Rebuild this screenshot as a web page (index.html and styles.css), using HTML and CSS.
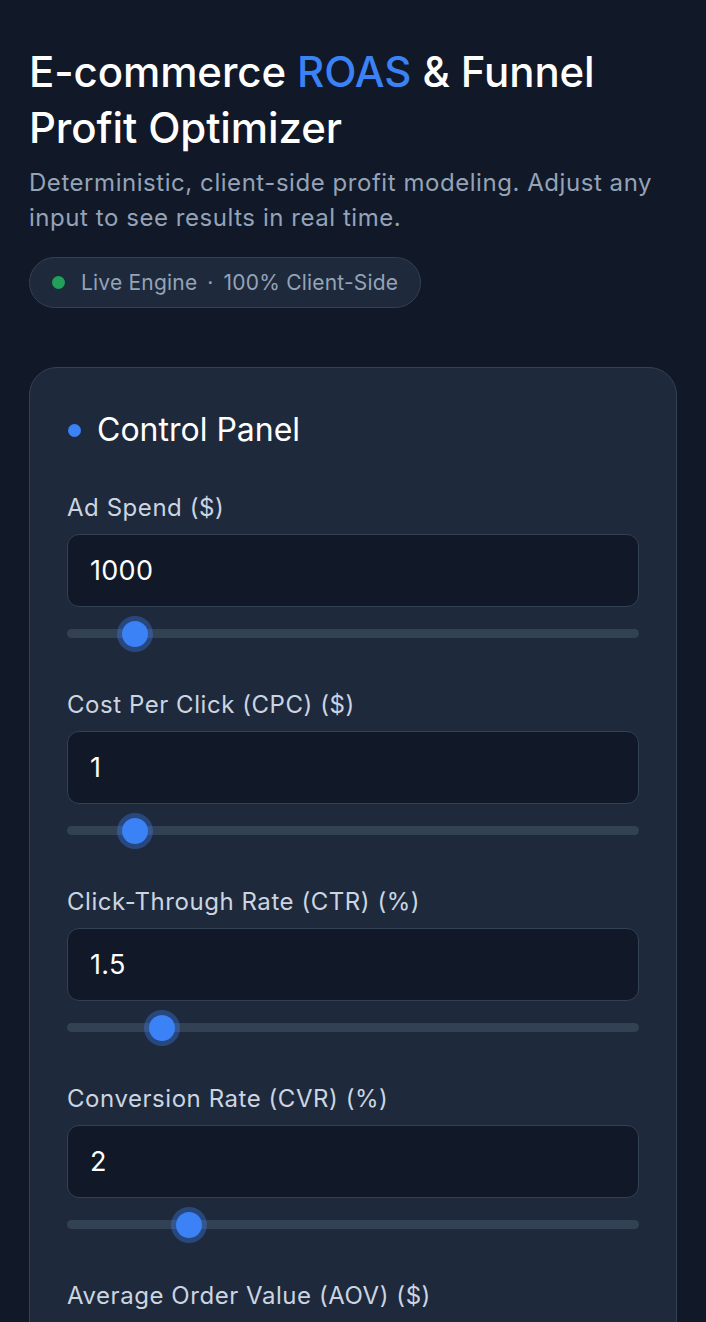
FILE: index.html
```html
<!DOCTYPE html>
<html lang="en">

<head>
    <meta charset="UTF-8">
    <meta name="viewport" content="width=device-width, initial-scale=1.0">
    <title>E-commerce ROAS &amp; Funnel Profit Optimizer</title>
    <link rel="stylesheet" href="styles.css">
</head>

<body>
    <div class="page">
        <header class="hero">
            <h1>E-commerce <span class="accent">ROAS</span> &amp; Funnel Profit Optimizer</h1>
            <p class="subtitle">Deterministic, client-side profit modeling. Adjust any input to see results in real time.</p>
            <div class="status-pill">
                <span class="status-dot"></span>
                <span>Live Engine</span>
                <span class="sep">·</span>
                <span>100% Client-Side</span>
            </div>
        </header>

        <section class="panel">
            <h2 class="panel-title"><span class="title-dot"></span>Control Panel</h2>

            <div class="field">
                <label for="adSpend">Ad Spend ($)</label>
                <input type="number" id="adSpend" value="1000">
                <input type="range" class="slider" min="0" max="10000" step="50" value="1000">
            </div>

            <div class="field">
                <label for="cpc">Cost Per Click (CPC) ($)</label>
                <input type="number" id="cpc" value="1">
                <input type="range" class="slider" min="0" max="10" step="0.05" value="1">
            </div>

            <div class="field">
                <label for="ctr">Click-Through Rate (CTR) (%)</label>
                <input type="number" id="ctr" value="1.5">
                <input type="range" class="slider" min="0" max="10" step="0.1" value="1.5">
            </div>

            <div class="field">
                <label for="cvr">Conversion Rate (CVR) (%)</label>
                <input type="number" id="cvr" value="2">
                <input type="range" class="slider" min="0" max="10" step="0.1" value="2">
            </div>

            <div class="field">
                <label for="aov">Average Order Value (AOV) ($)</label>
                <input type="number" id="aov" value="75">
                <input type="range" class="slider" min="0" max="500" step="1" value="75">
            </div>
        </section>
    </div>

    <script>
        // keep number box and slider in sync
        document.querySelectorAll('.field').forEach(function (field) {
            const box = field.querySelector('input[type="number"]');
            const slider = field.querySelector('.slider');
            box.addEventListener('input', function () { slider.value = box.value; });
            slider.addEventListener('input', function () { box.value = slider.value; });
        });
    </script>
</body>

</html>
```

FILE: styles.css
```css
* {
    padding: 0;
    margin: 0;
    box-sizing: border-box;
}

body {
    font-family: Inter, "Noto Sans", Arial, sans-serif;
    background-color: #111827;
    color: #f8fafc;
}

.page {
    padding: 44px 29px 40px;
}

.hero h1 {
    font-size: 42px;
    font-weight: 500;
    line-height: 56px;
    letter-spacing: -0.1px;
    color: #ffffff;
}

.accent {
    color: #3b82f6;
}

.subtitle {
    margin-top: 9px;
    font-size: 24px;
    line-height: 35px;
    letter-spacing: 0.55px;
    color: #94a3b8;
}

.status-pill {
    display: inline-flex;
    align-items: center;
    gap: 9px;
    margin-top: 22px;
    height: 51px;
    padding: 0 22px 0 22px;
    border: 1px solid #334155;
    border-radius: 999px;
    background-color: #1e293b;
    font-size: 21px;
    letter-spacing: 0.2px;
    color: #94a3b8;
}

.status-dot {
    width: 13px;
    height: 13px;
    margin-right: 7px;
    border-radius: 50%;
    background-color: #22a05a;
}

.sep {
    margin: 0 1px;
}

.panel {
    margin-top: 59px;
    padding: 40px 37px 20px;
    background-color: #1e293b;
    border: 1px solid #334155;
    border-radius: 28px;
}

.panel-title {
    display: flex;
    align-items: center;
    gap: 16px;
    font-size: 32px;
    font-weight: 400;
    line-height: 44px;
    color: #ffffff;
}

.title-dot {
    width: 13px;
    height: 13px;
    margin-left: 1px;
    border-radius: 50%;
    background-color: #3b82f6;
}

.field {
    margin-top: 40px;
}

.field + .field {
    margin-top: 51px;
}

.field label {
    display: block;
    font-size: 24px;
    line-height: 32px;
    letter-spacing: 0.55px;
    color: #cbd5e1;
    margin-bottom: 10px;
}

.field input[type="number"] {
    display: block;
    width: 100%;
    height: 73px;
    padding: 0 22px;
    background-color: #111827;
    border: 1px solid #334155;
    border-radius: 12px;
    color: #ffffff;
    font-family: inherit;
    font-size: 27px;
    letter-spacing: 0.3px;
    outline: none;
    -moz-appearance: textfield;
}

.field input[type="number"]::-webkit-outer-spin-button,
.field input[type="number"]::-webkit-inner-spin-button {
    -webkit-appearance: none;
    margin: 0;
}

.field input[type="number"]:focus {
    border-color: #3b82f6;
}

.slider {
    -webkit-appearance: none;
    appearance: none;
    display: block;
    width: 100%;
    height: 9px;
    margin-top: 22px;
    background-color: #334155;
    border-radius: 5px;
    outline: none;
}

.slider::-webkit-slider-thumb {
    -webkit-appearance: none;
    appearance: none;
    width: 26px;
    height: 26px;
    border-radius: 50%;
    background-color: #3b82f6;
    box-shadow: 0 0 0 5px rgba(59, 130, 246, 0.35);
    cursor: pointer;
}

.slider::-moz-range-thumb {
    width: 26px;
    height: 26px;
    border: none;
    border-radius: 50%;
    background-color: #3b82f6;
    box-shadow: 0 0 0 5px rgba(59, 130, 246, 0.35);
}
```
